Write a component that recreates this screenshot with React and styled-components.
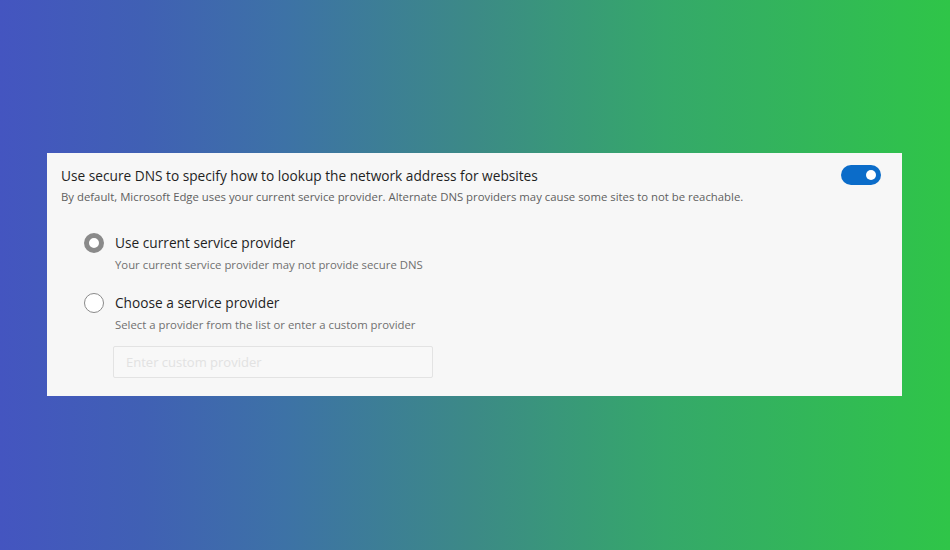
import React from 'react'
import styled, { createGlobalStyle } from 'styled-components'

const GlobalStyle = createGlobalStyle`
    html, body {
        margin: 0;
        padding: 0;
    }
    body {
        font-family: "Open Sans", "Noto Sans", sans-serif;
    }
`

const Backdrop = styled.div`
    width: 950px;
    height: 550px;
    box-sizing: border-box;
    padding-top: 153px;
    padding-left: 47px;
    background: linear-gradient(90deg, #4455c0 0%, #4060b4 15%, #3d72a6 30%, #3c8a86 50%, #35a86a 70%, #2fc548 100%);
`

const Card = styled.section`
    width: 855px;
    height: 243px;
    box-sizing: border-box;
    background: #f7f7f7;
    padding: 12px 21px 0 14px;
`

const HeaderRow = styled.div`
    display: flex;
    justify-content: space-between;
    align-items: flex-start;
`

const Title = styled.h2`
    margin: 0;
    margin-top: 1px;
    font-size: 13.7px;
    font-weight: 400;
    color: #1f1f1f;
    line-height: 20px;
`

const Subtitle = styled.p`
    margin: 3px 0 0;
    font-size: 11.35px;
    color: #5f5f5f;
    line-height: 16px;
`

const Toggle = styled.button`
    position: relative;
    width: 40px;
    height: 20px;
    border: none;
    border-radius: 10px;
    background: #0b6cc9;
    padding: 0;

    &::after {
        content: '';
        position: absolute;
        right: 5px;
        top: 5px;
        width: 10px;
        height: 10px;
        border-radius: 50%;
        background: #fff;
    }
`

const Options = styled.div`
    display: flex;
    flex-direction: column;
    gap: 20px;
    margin-top: 28px;
    padding-left: 23px;
`

const Option = styled.div`
    display: grid;
    grid-template-columns: 20px 1fr;
    column-gap: 11px;
    align-items: center;
`

const Radio = styled.span`
    width: 20px;
    height: 20px;
    box-sizing: border-box;
    border-radius: 50%;
    border: ${props => (props.checked ? '5px solid #8a8a8a' : '1px solid #8a8a8a')};
    background: #fff;
`

const Label = styled.div`
    font-size: 13.7px;
    color: #1f1f1f;
    line-height: 20px;
`

const Hint = styled.div`
    grid-column: 2;
    margin-top: 4px;
    font-size: 11.35px;
    color: #707070;
    line-height: 16px;
`

const Input = styled.input`
    grid-column: 2;
    width: 320px;
    height: 32px;
    box-sizing: border-box;
    margin: 13px 0 0 -2px;
    border: 1px solid #e3e3e3;
    border-radius: 2px;
    background: #f8f8f8;
    padding: 0 12px;
    font-family: inherit;
    font-size: 13px;
    outline: none;

    &::placeholder {
        color: #e2e2e2;
    }
`

const App = () => (
    <>
        <GlobalStyle />
        <Backdrop>
            <Card>
                <HeaderRow>
                    <div>
                        <Title>Use secure DNS to specify how to lookup the network address for websites</Title>
                        <Subtitle>
                            By default, Microsoft Edge uses your current service provider. Alternate DNS providers may cause some sites to not be reachable.
                        </Subtitle>
                    </div>
                    <Toggle aria-label="Use secure DNS" />
                </HeaderRow>
                <Options>
                    <Option>
                        <Radio checked />
                        <Label>Use current service provider</Label>
                        <Hint>Your current service provider may not provide secure DNS</Hint>
                    </Option>
                    <Option>
                        <Radio />
                        <Label>Choose a service provider</Label>
                        <Hint>Select a provider from the list or enter a custom provider</Hint>
                        <Input placeholder="Enter custom provider" />
                    </Option>
                </Options>
            </Card>
        </Backdrop>
    </>
)

export default App
